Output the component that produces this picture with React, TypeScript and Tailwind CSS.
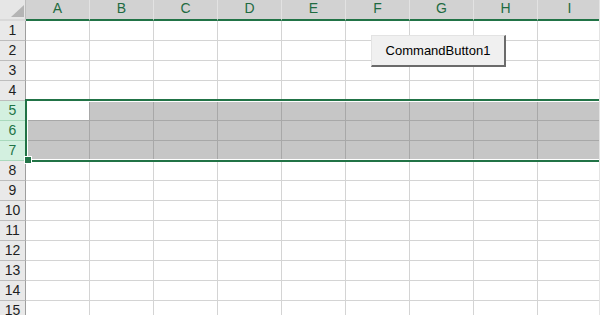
const cols = ['A', 'B', 'C', 'D', 'E', 'F', 'G', 'H', 'I'];
const rows = Array.from({ length: 15 }, (_, i) => i + 1);

function Row({ n }: { n: number }) {
  const sel = n >= 5 && n <= 7;
  return (
    <div className="flex h-[20px] shrink-0">
      <div
        className={
          sel
            ? 'w-[26px] shrink-0 flex items-center justify-center border-r border-b border-r-[#9e9e9e] border-b-[#a9d9bd] bg-[#d3f0e0] text-[#217346] text-[14px]'
            : 'w-[26px] shrink-0 flex items-center justify-center border-r border-b border-r-[#9e9e9e] border-b-[#bdbdbd] bg-[#e9e9e9] text-[#1f1f1f] text-[14px]'
        }
      >
        {n}
      </div>
      {cols.map((c) => {
        const grey = sel && !(n === 5 && c === 'A');
        return (
          <div
            key={c}
            className={
              grey
                ? 'w-[64px] shrink-0 border-r border-b border-[#a8a8a8] bg-[#c6c6c6]'
                : sel
                  ? 'w-[64px] shrink-0 border-r border-b border-[#a8a8a8] bg-white'
                  : 'w-[64px] shrink-0 border-r border-b border-[#d4d4d4] bg-white'
            }
          />
        );
      })}
    </div>
  );
}

export default function App() {
  return (
    <div className="relative w-[600px] h-[315px] overflow-hidden bg-white border-r border-[#e4e4e4] font-['Liberation_Sans',Arial,sans-serif]">
      <div className="flex flex-col">
        <div className="flex h-[21px] shrink-0">
          <div className="relative w-[26px] shrink-0 h-[21px] bg-[#e6e6e6] border-r border-b-2 border-r-[#bdbdbd] border-b-[#d9d9d9]">
            <svg className="absolute left-[11px] top-[5px]" width="13" height="12" viewBox="0 0 13 12">
              <polygon points="13,0 13,12 0,12" fill="#b4b4b4" />
            </svg>
          </div>
          {cols.map((c) => (
            <div
              key={c}
              className="w-[64px] shrink-0 h-[21px] flex items-center justify-center pb-[2px] bg-[#d2d2d2] border-r border-r-[#e2e2e2] border-b-2 border-b-[#217346] text-[14px] text-[#1e6b41]"
            >
              {c}
            </div>
          ))}
        </div>
        {rows.map((n) => (
          <Row key={n} n={n} />
        ))}
      </div>

      <div className="absolute left-[25px] top-[99px] w-[580px] h-[63px] border-2 border-[#217346] shadow-[inset_0_0_0_1px_#ffffff]" />
      <div className="absolute left-[24px] top-[156px] w-[8px] h-[8px] bg-[#217346] border border-white" />

      <div className="absolute left-[371px] top-[35px] w-[135px] h-[32px] flex items-center justify-center bg-[#f0f0f0] border-t border-l border-t-[#e3e3e3] border-l-[#e3e3e3] border-r-2 border-b-2 border-r-[#6b6b6b] border-b-[#6b6b6b] text-[13px] text-black">
        CommandButton1
      </div>
    </div>
  );
}
